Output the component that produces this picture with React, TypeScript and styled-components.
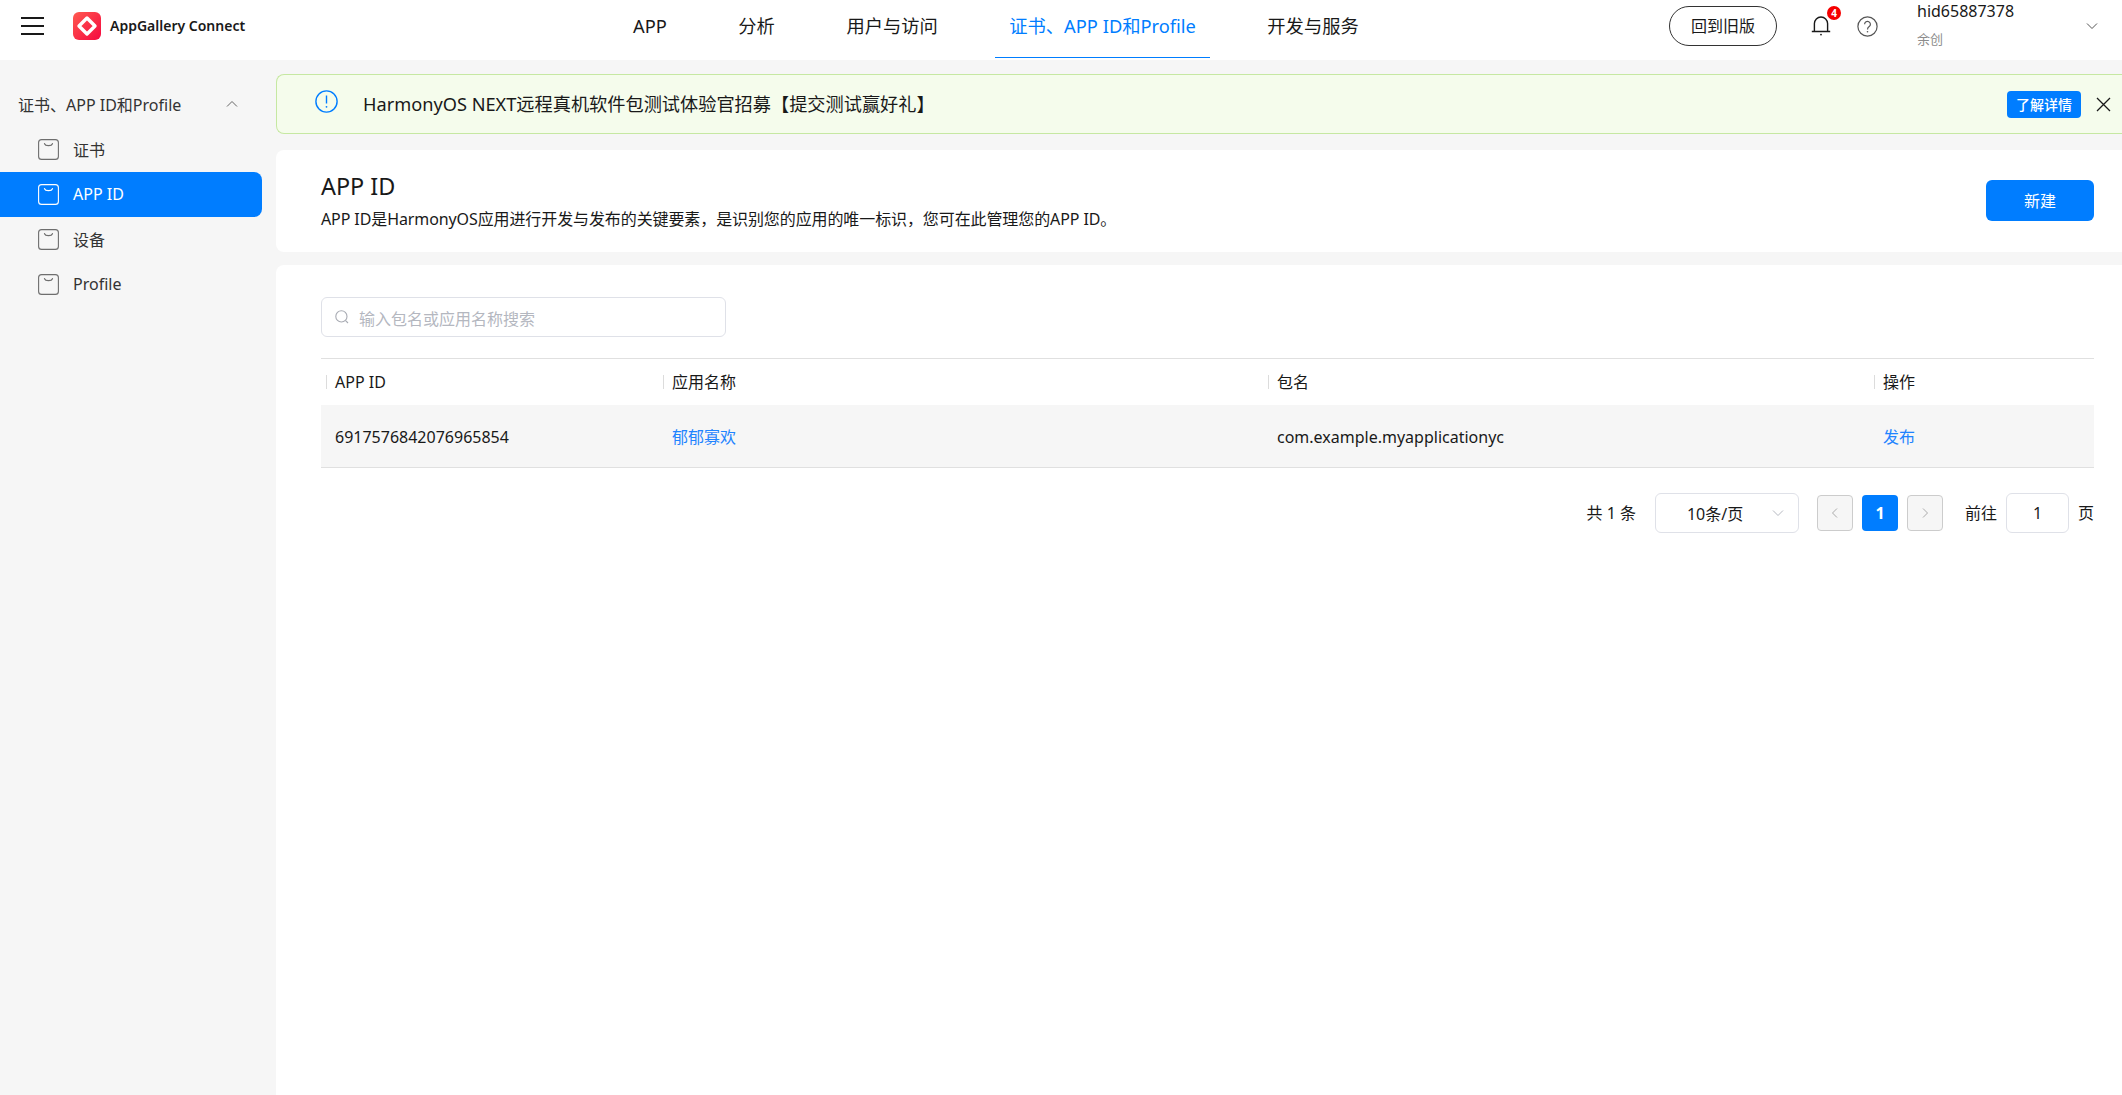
import styled, { createGlobalStyle } from "styled-components";

const navItems = ["APP", "分析", "用户与访问", "证书、APP ID和Profile", "开发与服务"];
const sideItems = ["证书", "APP ID", "设备", "Profile"];

const SideIcon = () => (
  <svg width="21" height="21" viewBox="0 0 21 21" fill="none" stroke="currentColor">
    <rect x="0.6" y="0.6" width="19.8" height="19.8" rx="3" strokeWidth="1.1" />
    <path d="M6.5 4.6c.9 2.8 7.1 2.8 8 0" strokeWidth="1.2" strokeLinecap="round" />
  </svg>
);

const Chevron = ({ size = 12, up = false, color = "#666" }: { size?: number; up?: boolean; color?: string }) => (
  <svg width={size} height={size} viewBox="0 0 12 12" fill="none" stroke={color} strokeWidth="1">
    <path d={up ? "M1 8.5 6 3.5l5 5" : "M1 3.5l5 5 5-5"} />
  </svg>
);

const App = () => {
  return (
    <>
      <GlobalStyle />
      <Page>
        <TopBar>
          <BrandArea>
            <Burger>
              <i />
              <i />
              <i />
            </Burger>
            <LogoMark>
              <svg width="28" height="28" viewBox="0 0 28 28">
                <defs>
                  <linearGradient id="logo" x1="0" y1="0" x2="1" y2="1">
                    <stop offset="0" stopColor="#ff5a50" />
                    <stop offset="1" stopColor="#f5083f" />
                  </linearGradient>
                </defs>
                <rect width="28" height="28" rx="6" fill="url(#logo)" />
                <path
                  d="M14 6 22 14 14 22 6 14Z"
                  fill="none"
                  stroke="#fff"
                  strokeWidth="3.4"
                  strokeLinejoin="round"
                />
              </svg>
            </LogoMark>
            <BrandName>AppGallery Connect</BrandName>
          </BrandArea>
          <Nav>
            {navItems.map((item, index) => (
              <NavItem key={item} $active={index === 3}>
                {item}
              </NavItem>
            ))}
          </Nav>
          <TopRight>
            <OldVersion>回到旧版</OldVersion>
            <BellWrap>
              <svg width="20" height="22" viewBox="0 0 20 22" fill="none" stroke="#191919" strokeWidth="1.4">
                <path d="M0.8 17.5h18.4M3.4 17.5V9.6a6.6 6.6 0 0 1 13.2 0v7.9" />
                <circle cx="10" cy="20.6" r="0.9" fill="#191919" stroke="none" />
              </svg>
              <Badge>4</Badge>
            </BellWrap>
            <HelpIcon>
              <svg width="21" height="21" viewBox="0 0 21 21" fill="none" stroke="#555" strokeWidth="1.2">
                <circle cx="10.5" cy="10.5" r="9.6" />
                <path d="M7.6 8.2a2.9 2.9 0 1 1 4.6 2.4c-1.1.8-1.7 1.3-1.7 2.8" />
                <circle cx="10.5" cy="15.8" r="0.8" fill="#555" stroke="none" />
              </svg>
            </HelpIcon>
            <Account>
              <AccountName>hid65887378</AccountName>
              <AccountSub>余创</AccountSub>
            </Account>
            <AccountArrow>
              <Chevron color="#555" />
            </AccountArrow>
          </TopRight>
        </TopBar>
        <Body>
          <Sidebar>
            <SideTitle>
              <span>证书、APP ID和Profile</span>
              <Chevron up />
            </SideTitle>
            {sideItems.map((item) => (
              <SideItem key={item} $active={item === "APP ID"}>
                <SideIcon />
                {item}
              </SideItem>
            ))}
          </Sidebar>
          <Content>
            <Notice>
              <NoticeIcon>
                <svg width="23" height="23" viewBox="0 0 23 23" fill="none" stroke="#007dff" strokeWidth="1.4">
                  <circle cx="11.5" cy="11.5" r="10.6" />
                  <path d="M11.5 5.5v8" />
                  <circle cx="11.5" cy="16.8" r="0.9" fill="#007dff" stroke="none" />
                </svg>
              </NoticeIcon>
              <NoticeText>HarmonyOS NEXT远程真机软件包测试体验官招募【提交测试赢好礼】</NoticeText>
              <NoticeButton>了解详情</NoticeButton>
              <CloseIcon>
                <svg width="15" height="15" viewBox="0 0 15 15" stroke="#191919" strokeWidth="1.3">
                  <path d="M1 1l13 13M14 1 1 14" />
                </svg>
              </CloseIcon>
            </Notice>
            <TitleCard>
              <div>
                <PageTitle>APP ID</PageTitle>
                <PageDesc>APP ID是HarmonyOS应用进行开发与发布的关键要素，是识别您的应用的唯一标识，您可在此管理您的APP ID。</PageDesc>
              </div>
              <PrimaryButton>新建</PrimaryButton>
            </TitleCard>
            <ListCard>
              <SearchBox>
                <svg width="14" height="14" viewBox="0 0 14 14" fill="none" stroke="#a8abb3" strokeWidth="1.1">
                  <circle cx="6.4" cy="6.4" r="5.6" />
                  <path d="M10.6 10.6l2.4 2.4" />
                </svg>
                <SearchHint>输入包名或应用名称搜索</SearchHint>
              </SearchBox>
              <TableHead>
                <HeadCell>APP ID</HeadCell>
                <HeadCell>应用名称</HeadCell>
                <HeadCell>包名</HeadCell>
                <HeadCell>操作</HeadCell>
              </TableHead>
              <TableRow>
                <Cell>6917576842076965854</Cell>
                <Cell $link>郁郁寡欢</Cell>
                <Cell>com.example.myapplicationyc</Cell>
                <Cell $link>发布</Cell>
              </TableRow>
              <Pager>
                <PagerText>共 1 条</PagerText>
                <PageSize>
                  <span>10条/页</span>
                  <Chevron color="#b5b8c0" />
                </PageSize>
                <PageButtons>
                  <PageArrow>
                    <svg width="8" height="12" viewBox="0 0 8 12" fill="none" stroke="#aaa">
                      <path d="M6 1.5 1.5 6 6 10.5" />
                    </svg>
                  </PageArrow>
                  <PageCurrent>1</PageCurrent>
                  <PageArrow>
                    <svg width="8" height="12" viewBox="0 0 8 12" fill="none" stroke="#aaa">
                      <path d="M2 1.5 6.5 6 2 10.5" />
                    </svg>
                  </PageArrow>
                </PageButtons>
                <PagerText>前往</PagerText>
                <PageInput>1</PageInput>
                <PagerText>页</PagerText>
              </Pager>
            </ListCard>
          </Content>
        </Body>
      </Page>
    </>
  );
};

export default App;

const GlobalStyle = createGlobalStyle`
  html, body {
    margin: 0;
    padding: 0;
    background: #f6f6f6;
  }

  body {
    font-family: "Noto Sans", "Noto Sans CJK SC", sans-serif;
    color: #191919;
  }

  * {
    box-sizing: border-box;
  }
`;

const Page = styled.div`
  height: 1095px;
  display: flex;
  flex-direction: column;
  overflow: hidden;
`;

const TopBar = styled.header`
  height: 60px;
  flex-shrink: 0;
  display: flex;
  background: #fff;
`;

const BrandArea = styled.div`
  width: 619px;
  height: 52px;
  flex-shrink: 0;
  display: flex;
  align-items: center;
  padding-left: 21px;
`;

const Burger = styled.div`
  width: 23px;
  display: flex;
  flex-direction: column;
  gap: 6.5px;

  & > i {
    display: block;
    height: 1.6px;
    background: #191919;
  }
`;

const LogoMark = styled.div`
  width: 28px;
  height: 28px;
  margin-left: 29px;
  display: flex;
`;

const BrandName = styled.span`
  margin-left: 9px;
  font-size: 14px;
  font-weight: 600;
  line-height: 20px;
  white-space: nowrap;
`;

const Nav = styled.nav`
  display: flex;
  gap: 43.5px;
`;

const NavItem = styled.div<{ $active?: boolean }>`
  height: 58px;
  padding: 0 14px;
  line-height: 52px;
  font-size: 18.3px;
  white-space: nowrap;
  color: ${(p) => (p.$active ? "#007dff" : "#191919")};
  border-bottom: 1.5px solid ${(p) => (p.$active ? "#007dff" : "transparent")};
`;

const TopRight = styled.div`
  margin-left: auto;
  width: 453px;
  height: 52px;
  display: flex;
  align-items: center;
`;

const OldVersion = styled.div`
  width: 108px;
  height: 40px;
  border: 1px solid #333;
  border-radius: 20px;
  font-size: 16px;
  line-height: 38px;
  text-align: center;
`;

const BellWrap = styled.div`
  position: relative;
  width: 20px;
  height: 22px;
  margin-left: 34px;
  margin-top: -2px;
  display: flex;
`;

const Badge = styled.span`
  position: absolute;
  top: -8px;
  left: 16px;
  width: 14px;
  height: 14px;
  border-radius: 50%;
  background: #f50000;
  color: #fff;
  font-size: 10px;
  font-weight: 700;
  line-height: 14px;
  text-align: center;
`;

const HelpIcon = styled.div`
  margin-left: 26px;
  display: flex;
`;

const Account = styled.div`
  margin-left: 39px;
  width: 169px;
  align-self: flex-start;
`;

const AccountName = styled.div`
  font-size: 16px;
  line-height: 22px;
`;

const AccountSub = styled.div`
  margin-top: 8px;
  font-size: 13px;
  line-height: 18px;
  color: #8c8c8c;
`;

const AccountArrow = styled.div`
  display: flex;
`;

const Body = styled.div`
  flex: 1;
  display: flex;
  min-height: 0;
`;

const Sidebar = styled.aside`
  width: 276px;
  flex-shrink: 0;
  padding-top: 23px;
`;

const SideTitle = styled.div`
  width: 220px;
  height: 44px;
  margin-left: 18px;
  padding-bottom: 2px;
  display: flex;
  align-items: center;
  justify-content: space-between;
  font-size: 16px;
  color: #333;
`;

const SideItem = styled.div<{ $active?: boolean }>`
  width: 262px;
  height: 45px;
  padding: 0 0 2px 38px;
  display: flex;
  align-items: center;
  gap: 14px;
  font-size: 16px;
  border-radius: 0 8px 8px 0;
  color: ${(p) => (p.$active ? "#fff" : "#333")};
  background: ${(p) => (p.$active ? "#007dff" : "transparent")};

  & > svg {
    margin-top: 2px;
    color: ${(p) => (p.$active ? "#fff" : "#6e6e6e")};
  }
`;

const Content = styled.main`
  flex: 1;
  min-width: 0;
  padding-top: 14px;
  display: flex;
  flex-direction: column;
`;

const Notice = styled.div`
  height: 60px;
  flex-shrink: 0;
  display: flex;
  align-items: center;
  padding-left: 38px;
  padding-right: 11px;
  background: #f5fcec;
  border: 1px solid #c6e8a2;
  border-radius: 8px 0 0 8px;
  border-right: none;
`;

const NoticeIcon = styled.div`
  display: flex;
  margin-top: -5px;
`;

const NoticeText = styled.div`
  margin-left: 25px;
  flex: 1;
  font-size: 18.2px;
  line-height: 26px;
`;

const NoticeButton = styled.div`
  width: 74px;
  height: 27px;
  border-radius: 4px;
  background: #007dff;
  color: #fff;
  font-size: 14px;
  font-weight: 500;
  line-height: 27px;
  text-align: center;
`;

const CloseIcon = styled.div`
  margin-left: 15px;
  display: flex;
`;

const TitleCard = styled.section`
  height: 102px;
  margin-top: 16px;
  flex-shrink: 0;
  display: flex;
  align-items: center;
  justify-content: space-between;
  padding: 0 28px 0 45px;
  background: #fff;
  border-radius: 8px 0 0 8px;
`;

const PageTitle = styled.h1`
  margin: -3px 0 0;
  font-size: 23.4px;
  font-weight: 400;
  line-height: 32px;
`;

const PageDesc = styled.p`
  margin: 6px 0 0;
  font-size: 16px;
  letter-spacing: -0.1px;
  line-height: 22px;
`;

const PrimaryButton = styled.div`
  width: 108px;
  height: 41px;
  margin-top: -1px;
  border-radius: 6px;
  background: #007dff;
  color: #fff;
  font-size: 16px;
  line-height: 43px;
  text-align: center;
`;

const ListCard = styled.section`
  flex: 1;
  margin-top: 13px;
  padding: 32px 28px 0 45px;
  background: #fff;
  border-radius: 8px 0 0 0;
`;

const SearchBox = styled.div`
  width: 405px;
  height: 40px;
  padding-left: 13px;
  display: flex;
  align-items: center;
  gap: 10px;
  border: 1px solid #dfe1e8;
  border-radius: 6px;
`;

const SearchHint = styled.span`
  padding-top: 2px;
  font-size: 16px;
  color: #b4b7bf;
`;

const TableHead = styled.div`
  margin-top: 21px;
  height: 47px;
  display: grid;
  grid-template-columns: 337px 605px 606px 1fr;
  align-items: center;
  border-top: 1px solid #e0e0e0;
`;

const HeadCell = styled.div`
  position: relative;
  padding-left: 14px;
  font-size: 16px;
  line-height: 22px;

  &::before {
    content: "";
    position: absolute;
    left: 5px;
    top: 4px;
    width: 1px;
    height: 14px;
    background: #dcdcdc;
  }
`;

const TableRow = styled.div`
  height: 63px;
  padding-top: 1px;
  display: grid;
  grid-template-columns: 337px 605px 606px 1fr;
  align-items: center;
  background: #f6f6f6;
  border-bottom: 1px solid #e0e0e0;
`;

const Cell = styled.div<{ $link?: boolean }>`
  padding-left: 14px;
  font-size: 16px;
  line-height: 22px;
  color: ${(p) => (p.$link ? "#1f84ff" : "#191919")};
`;

const Pager = styled.div`
  margin-top: 25px;
  display: flex;
  justify-content: flex-end;
  align-items: center;
`;

const PagerText = styled.span`
  font-size: 16px;
  line-height: 22px;
`;

const PageSize = styled.div`
  width: 144px;
  height: 40px;
  margin-left: 19px;
  padding: 0 14px 0 31px;
  display: flex;
  align-items: center;
  justify-content: space-between;
  font-size: 16px;
  border: 1px solid #dfe1e8;
  border-radius: 6px;
`;

const PageButtons = styled.div`
  margin: 0 22px 0 18px;
  display: flex;
  gap: 9px;
`;

const PageArrow = styled.div`
  width: 36px;
  height: 36px;
  display: flex;
  align-items: center;
  justify-content: center;
  background: #f6f6f6;
  border: 1px solid #ccc;
  border-radius: 4px;
`;

const PageCurrent = styled.div`
  width: 36px;
  height: 36px;
  border-radius: 4px;
  background: #007dff;
  color: #fff;
  font-size: 16px;
  font-weight: 700;
  line-height: 36px;
  text-align: center;
`;

const PageInput = styled.div`
  width: 63px;
  height: 40px;
  margin: 0 9px;
  border: 1px solid #dfe1e8;
  border-radius: 6px;
  font-size: 16px;
  line-height: 38px;
  text-align: center;
`;
